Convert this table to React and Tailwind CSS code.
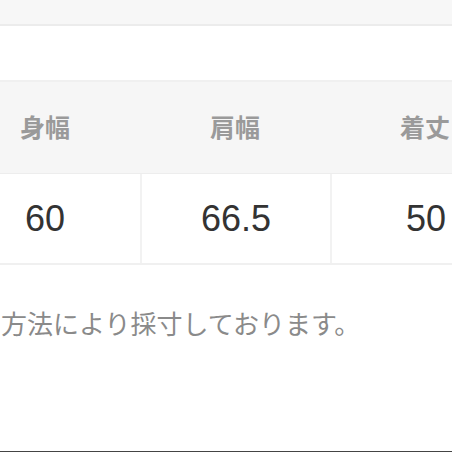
import React from 'react';

const cols = [
  { label: '身幅', value: '60' },
  { label: '肩幅', value: '66.5' },
  { label: '着丈', value: '50' },
];

function App() {
  const font = { fontFamily: '"Liberation Sans", "Noto Sans CJK JP", sans-serif' };

  return (
    <div className="w-[452px] h-[452px] overflow-hidden bg-white flex flex-col" style={font}>
      <div className="h-[26px] bg-[#f7f7f7] border-b-2 border-[#ececec]" />
      <div className="h-[54px]" />

      <div className="w-[570px] -ml-[50px] border-t-2 border-[#f0f0f0]">
        <div className="grid grid-cols-3 h-[91px] bg-[#f6f6f6]">
          {cols.map((c) => (
            <div key={c.label} className="flex items-center justify-center pt-[3px] text-[25px] font-bold text-[#9a9a9a]">
              {c.label}
            </div>
          ))}
        </div>
        <div className="grid grid-cols-3 h-[92px] border-t border-[#ededed] border-b-2 border-b-[#f0f0f0]">
          {cols.map((c, i) => (
            <div
              key={c.label}
              className={`flex items-center justify-center text-[36px] text-[#333] ${i > 0 ? 'border-l-2 border-[#f2f2f2]' : ''}`}
            >
              {c.value}
            </div>
          ))}
        </div>
      </div>

      <div className="mt-[45px] pl-[1px] text-[26px] leading-[30px] text-[#8a8a8a] whitespace-nowrap">
        方法により採寸しております。
      </div>

      <div className="flex-1" />
      <div className="h-[1px] bg-[#444]" />
    </div>
  );
}

export default App;
